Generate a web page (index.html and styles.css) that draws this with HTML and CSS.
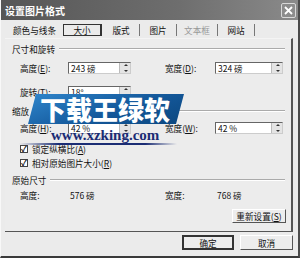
FILE: index.html
```html
<!DOCTYPE html>
<html lang="zh-CN">
<head>
    <meta charset="UTF-8">
    <title>设置图片格式</title>
    <link rel="stylesheet" href="styles.css">
</head>
<body>
    <div class="window">
        <div class="titlebar">
            <span class="title">设置图片格式</span>
            <span class="close">
                <svg width="11" height="11" viewBox="0 0 11 11"><path d="M2 2 L9 9 M9 2 L2 9" stroke="#fff" stroke-width="1.8"/></svg>
            </span>
        </div>

        <div class="tabs">
            <span class="tab first">颜色与线条</span>
            <span class="tab active">大小</span>
            <span class="tab">版式</span>
            <span class="tab">图片</span>
            <span class="tab disabled">文本框</span>
            <span class="tab">网站</span>
        </div>

        <div class="panel">
            <div class="group">尺寸和旋转<span class="rule"></span></div>
            <div class="row first-row">
                <label>高度(<u>E</u>):</label>
                <div class="spin"><span>243 磅</span><i></i></div>
                <span></span>
                <label>宽度(<u>D</u>):</label>
                <div class="spin"><span>324 磅</span><i></i></div>
            </div>
            <div class="row gap">
                <label>旋转(<u>T</u>):</label>
                <div class="spin"><span>18°</span><i></i></div>
            </div>

            <div class="group mid">缩放<span class="rule"></span></div>
            <div class="row">
                <label>高度(<u>H</u>):</label>
                <div class="spin"><span>42 %</span><i></i></div>
                <span></span>
                <label>宽度(<u>W</u>):</label>
                <div class="spin"><span>42 %</span><i></i></div>
            </div>
            <div class="check first-check"><span class="box">✓</span>锁定纵横比(<u>A</u>)</div>
            <div class="check"><span class="box">✓</span>相对原始图片大小(<u>R</u>)</div>

            <div class="group small">原始尺寸<span class="rule"></span></div>
            <div class="row info">
                <label>高度:</label>
                <span class="val">576 磅</span>
                <span></span>
                <label>宽度:</label>
                <span class="val">768 磅</span>
            </div>
            <div class="reset-line">
                <button class="btn reset">重新设置(<u>S</u>)</button>
            </div>
        </div>

        <div class="footer">
            <button class="btn default">确定</button>
            <button class="btn">取消</button>
        </div>

        <div class="banner">下载王绿软</div>
        <div class="site">www.xzking.com</div>
    </div>
</body>
</html>
```

FILE: styles.css
```css
* {
    margin: 0;
    padding: 0;
    box-sizing: border-box;
}
body {
    font-family: "Noto Sans CJK SC", sans-serif;
    font-size: 8.6px;
    color: #111;
    background-color: #ebebeb;
}
.window {
    position: relative;
    width: 300px;
    height: 258px;
    background-color: #ebebeb;
    border-left: 1px solid #f8f8f8;
    border-right: 2px solid #4a4a4a;
    border-bottom: 2px solid #3a3a3a;
    overflow: hidden;
}
.titlebar {
    height: 20px;
    background: linear-gradient(to right, #565656, #6e6e6e 60%, #8a8a8a);
    display: flex;
    align-items: center;
    justify-content: space-between;
    padding: 0 2px 0 4px;
}
.title {
    color: #fff;
    font-weight: bold;
    font-size: 10px;
}
.close {
    width: 15px;
    height: 15px;
    border: 1px solid #d8d8d8;
    border-radius: 2px;
    background-color: #8c8c8c;
    display: flex;
    align-items: center;
    justify-content: center;
}
.tabs {
    display: flex;
    align-items: center;
    height: 16px;
    margin-top: 2px;
}
.tab {
    width: 37px;
    height: 12px;
    line-height: 12px;
    text-align: center;
    border-right: 1px solid #777;
}
.tab.first {
    width: 49px;
    margin-left: 9px;
    margin-right: 4px;
    border-right: none;
}
.tab.active {
    width: 39px;
    height: 12px;
    border: 1px solid #333;
    border-right-width: 2px;
    margin-right: 1px;
    line-height: 10px;
}
.tab.disabled {
    width: 41px;
    color: #999;
}
.panel {
    margin: 0 5px 0 4px;
    height: 194px;
    border-top: 1px solid #f4f4f4;
    border-right: 2px solid #555;
    border-bottom: 1px solid #555;
    background-color: #ececec;
}
.group {
    display: flex;
    align-items: center;
    height: 20px;
    padding-left: 7px;
    padding-right: 6px;
}
.group.mid {
    height: 18px;
    margin-top: 4px;
}
.group.small {
    height: 18px;
    margin-top: 2px;
}
.rule {
    flex: 1;
    margin-left: 4px;
    border-top: 1px solid #aaa;
    border-bottom: 1px solid #fff;
}
.row {
    display: grid;
    grid-template-columns: 48px 63px 34px 50px 68px;
    height: 12px;
    margin-top: 2px;
    padding-left: 15px;
    align-items: center;
}
.row.first-row {
    margin-top: 3px;
}
.row.gap {
    margin-top: 12px;
}
.row.info {
    margin-top: 0;
}
.row label {
    white-space: nowrap;
}
.spin {
    position: relative;
    height: 12px;
    background-color: #fff;
    border: 1px solid #666;
    border-right-color: #ccc;
    border-bottom-color: #ccc;
    padding-left: 2px;
    line-height: 10px;
    font-size: 8.5px;
}
.spin i {
    position: absolute;
    right: 0;
    top: 0;
    width: 11px;
    height: 10px;
    background-color: #e4e4e4;
    border-left: 1px solid #bbb;
}
.spin i::before, .spin i::after {
    content: "";
    position: absolute;
    left: 4px;
    border-left: 2px solid transparent;
    border-right: 2px solid transparent;
}
.spin i::before {
    top: 1px;
    border-bottom: 2px solid #333;
}
.spin i::after {
    bottom: 1px;
    border-top: 2px solid #333;
}
.check {
    display: flex;
    align-items: center;
    height: 12px;
    margin-top: 2px;
    padding-left: 15px;
}
.check.first-check {
    margin-top: 9px;
}
.box {
    width: 8px;
    height: 8px;
    margin-right: 4px;
    background-color: #fff;
    border: 1px solid #444;
    font-size: 8px;
    line-height: 6px;
    text-align: center;
    font-weight: bold;
}
.val {
    font-size: 8.5px;
    padding-left: 2px;
}
.reset-line {
    display: flex;
    justify-content: flex-end;
    margin-top: 8px;
    padding-right: 5px;
}
.btn {
    font-family: "Noto Sans CJK SC", sans-serif;
    font-size: 8.6px;
    color: #111;
    background-color: #ededed;
    border: 1px solid #fff;
    border-right-color: #555;
    border-bottom-color: #555;
    height: 15px;
    width: 53px;
    line-height: 12px;
}
.btn.reset {
    width: 54px;
    height: 14px;
}
.btn.default {
    border: 2px solid #333;
    width: 52px;
}
.footer {
    display: flex;
    justify-content: flex-end;
    gap: 6px;
    margin-top: 3px;
    padding-right: 5px;
}
.banner {
    position: absolute;
    left: 27px;
    top: 94px;
    width: 156px;
    height: 30px;
    clip-path: polygon(8px 0, 100% 0, 148px 100%, 0 100%);
    background: linear-gradient(160deg, #2f86cc, #14599c 55%, #0c477f);
    color: #fff;
    font-size: 26px;
    font-weight: 900;
    line-height: 30px;
    padding-left: 12px;
}
.site {
    position: absolute;
    left: 50px;
    top: 128px;
    font-family: "Liberation Serif", serif;
    font-weight: bold;
    font-size: 15px;
    line-height: 14px;
    color: #1b2d74;
    padding-bottom: 1px;
}
.site::after {
    content: "";
    position: absolute;
    left: -32px;
    right: -18px;
    bottom: -2px;
    height: 2px;
    background: linear-gradient(to right, rgba(27, 45, 116, 0), #1b2d74 25%, #1b2d74 80%, rgba(27, 45, 116, 0));
}
```
